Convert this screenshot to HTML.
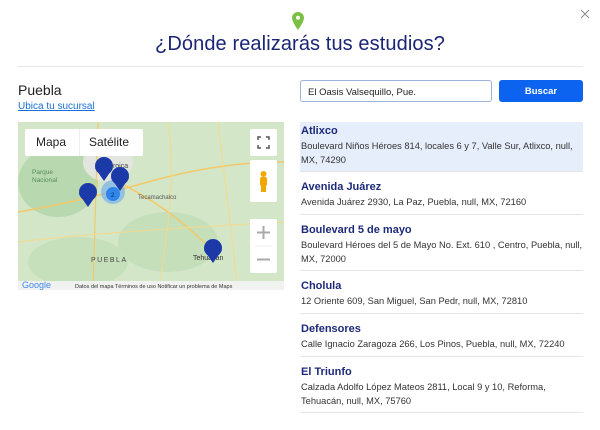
<!DOCTYPE html>
<html><head><meta charset="utf-8"><style>
*{margin:0;padding:0;box-sizing:border-box}
body{width:600px;height:430px;background:#fff;font-family:"Liberation Sans",sans-serif;position:relative;overflow:hidden}
.abs{position:absolute}
h1{position:absolute;top:33px;left:0;width:600px;text-align:center;font-size:20px;font-weight:normal;color:#1a2575;letter-spacing:0.1px}
.item{position:absolute;left:300px;width:283px;border-bottom:1px solid #e3e5ea;padding:2px 0 0 1px}
.item b{display:block;font-size:11px;color:#1d2a7a;font-weight:bold;line-height:14px;margin-bottom:1px}
.item span{display:block;font-size:9.3px;color:#333;line-height:14px}
</style></head><body>
<svg class="abs" style="left:292px;top:12px" width="12" height="18" viewBox="0 0 12 18"><path d="M6 0C2.7 0 0 2.6 0 5.8 0 10 6 18 6 18s6-8 6-12.2C12 2.6 9.3 0 6 0z" fill="#7ac143"/><circle cx="6" cy="5.8" r="2" fill="#fff"/></svg>
<svg class="abs" style="left:580px;top:9px" width="10" height="10" viewBox="0 0 10 10"><path d="M1 1L9 9M9 1L1 9" stroke="#888" stroke-width="1"/></svg>
<h1>¿Dónde realizarás tus estudios?</h1>
<div class="abs" style="left:18px;top:66px;width:565px;height:1px;background:#e4e6ea"></div>
<div class="abs" style="left:18px;top:82px;font-size:14px;color:#222">Puebla</div>
<div class="abs" style="left:18px;top:101px;font-size:10px;color:#1a6fd8;text-decoration:underline">Ubica tu sucursal</div>
<div class="abs" style="left:300px;top:80px;width:192px;height:22px;border:1px solid #9db3d8;border-radius:3px;font-size:9.5px;color:#222;padding:6px 7px">El Oasis Valsequillo, Pue.</div>
<div class="abs" style="left:499px;top:80px;width:84px;height:22px;background:#0b63f0;border-radius:3px;color:#fff;font-size:9.5px;font-weight:bold;display:flex;align-items:center;justify-content:center">Buscar</div>
<!-- map -->
<div class="abs" style="left:18px;top:122px;width:266px;height:168px;background:#cfe4c4;overflow:hidden">
<svg width="266" height="168" style="position:absolute;left:0;top:0">
<rect width="266" height="168" fill="#d4e6c8"/>
<ellipse cx="40" cy="60" rx="40" ry="35" fill="#b8d8b0"/>
<ellipse cx="150" cy="120" rx="50" ry="30" fill="#c4dfba"/>
<ellipse cx="90" cy="40" rx="25" ry="20" fill="#e2e6de"/>
<ellipse cx="60" cy="140" rx="50" ry="25" fill="#c6e0bc"/>
<path d="M0 90 Q60 80 130 60 T266 40" stroke="#f2c96a" stroke-width="1.5" fill="none"/>
<path d="M80 0 L75 168" stroke="#f2c96a" stroke-width="1.2" fill="none"/>
<path d="M100 60 Q160 90 200 135" stroke="#f2c96a" stroke-width="1.5" fill="none"/>
<path d="M150 0 Q160 60 140 168" stroke="#f5d98a" stroke-width="1" fill="none"/>
<path d="M200 0 L220 168" stroke="#f5d98a" stroke-width="1" fill="none"/>
<path d="M0 120 Q80 110 266 100" stroke="#f5d98a" stroke-width="1" fill="none"/>
<text x="120" y="77" font-size="6" fill="#555" font-family="Liberation Sans">Tecamachalco</text>
<text x="73" y="140" font-size="7" fill="#444" letter-spacing="1.5" font-family="Liberation Sans">PUEBLA</text>
<text x="175" y="138" font-size="7" fill="#333" font-family="Liberation Sans">Tehuacán</text>
<text x="14" y="52" font-size="6.5" fill="#5a8a5a" font-family="Liberation Sans">Parque</text>
<text x="14" y="60" font-size="6.5" fill="#5a8a5a" font-family="Liberation Sans">Nacional</text>
<text x="86" y="46" font-size="7" fill="#444" font-family="Liberation Sans">Heroica</text>
<circle cx="95" cy="70" r="12" fill="#6aa8f0" opacity="0.6"/>
<circle cx="95" cy="72" r="7" fill="#2f86e8"/>
<text x="93" y="75" font-size="6" fill="#0a2a6a">2</text>
<circle cx="70" cy="70" r="9" fill="#1b3aa8"/><path d="M61 72l9 13 9-13z" fill="#1b3aa8"/>
<circle cx="86" cy="44" r="9" fill="#1b3aa8"/><path d="M77 46l9 13 9-13z" fill="#1b3aa8"/>
<circle cx="102" cy="54" r="9" fill="#1b3aa8"/><path d="M93 56l9 13 9-13z" fill="#1b3aa8"/>
<circle cx="195" cy="126" r="9" fill="#1b3aa8"/><path d="M186 128l9 13 9-13z" fill="#1b3aa8"/>
<rect x="0" y="159" width="266" height="9" fill="#f3f3f3" opacity="0.9"/>
<text x="4" y="166" font-size="9" fill="#4285f4" font-family="Liberation Sans">Google</text>
<text x="57" y="166" font-size="5.5" fill="#333" font-family="Liberation Sans">Datos del mapa   Términos de uso   Notificar un problema de Maps</text>
</svg>
<div class="abs" style="left:7px;top:7px;width:118px;height:27px;background:#fff;border-radius:2px;font-size:12px;color:#222;line-height:27px"><span style="position:absolute;left:11px">Mapa</span><span style="position:absolute;left:64px">Satélite</span><div class="abs" style="left:54px;top:0;width:1px;height:27px;background:#eee"></div></div>
<div class="abs" style="left:232px;top:7px;width:27px;height:27px;background:#fff;border-radius:2px"><svg width="27" height="27"><path d="M8 11V8h3M16 8h3v3M19 16v3h-3M11 19H8v-3" stroke="#555" stroke-width="1.5" fill="none"/></svg></div>
<div class="abs" style="left:232px;top:38px;width:27px;height:42px;background:#fff;border-radius:2px"><svg width="27" height="42"><circle cx="13.5" cy="14" r="3" fill="#f0a800"/><rect x="10" y="17" width="7" height="9" rx="2" fill="#f0a800"/><rect x="11" y="25" width="5" height="7" fill="#f0a800"/></svg></div>
<div class="abs" style="left:232px;top:97px;width:27px;height:54px;background:#fff;border-radius:2px"><svg width="27" height="54"><path d="M13.5 7v13M7 13.5h13M7 40.5h13" stroke="#aaa" stroke-width="2"/><path d="M5 27h17" stroke="#eee"/></svg></div>
</div>
<!-- list -->
<div class="abs" style="left:300px;top:122px;width:283px;height:50px;background:#e6edfb"></div>
<div class="item" style="top:122px;height:50px"><b>Atlixco</b><span>Boulevard Niños Héroes 814, locales 6 y 7, Valle Sur, Atlixco, null, MX, 74290</span></div>
<div class="item" style="top:178px;height:37px"><b>Avenida Juárez</b><span>Avenida Juárez 2930, La Paz, Puebla, null, MX, 72160</span></div>
<div class="item" style="top:221px;height:50px"><b>Boulevard 5 de mayo</b><span>Boulevard Héroes del 5 de Mayo No. Ext. 610 , Centro, Puebla, null, MX, 72000</span></div>
<div class="item" style="top:277px;height:37px"><b>Cholula</b><span>12 Oriente 609, San Miguel, San Pedr, null, MX, 72810</span></div>
<div class="item" style="top:320px;height:37px"><b>Defensores</b><span>Calle Ignacio Zaragoza 266, Los Pinos, Puebla, null, MX, 72240</span></div>
<div class="item" style="top:363px;height:50px"><b>El Triunfo</b><span>Calzada Adolfo López Mateos 2811, Local 9 y 10, Reforma, Tehuacán, null, MX, 75760</span></div>
</body></html>
